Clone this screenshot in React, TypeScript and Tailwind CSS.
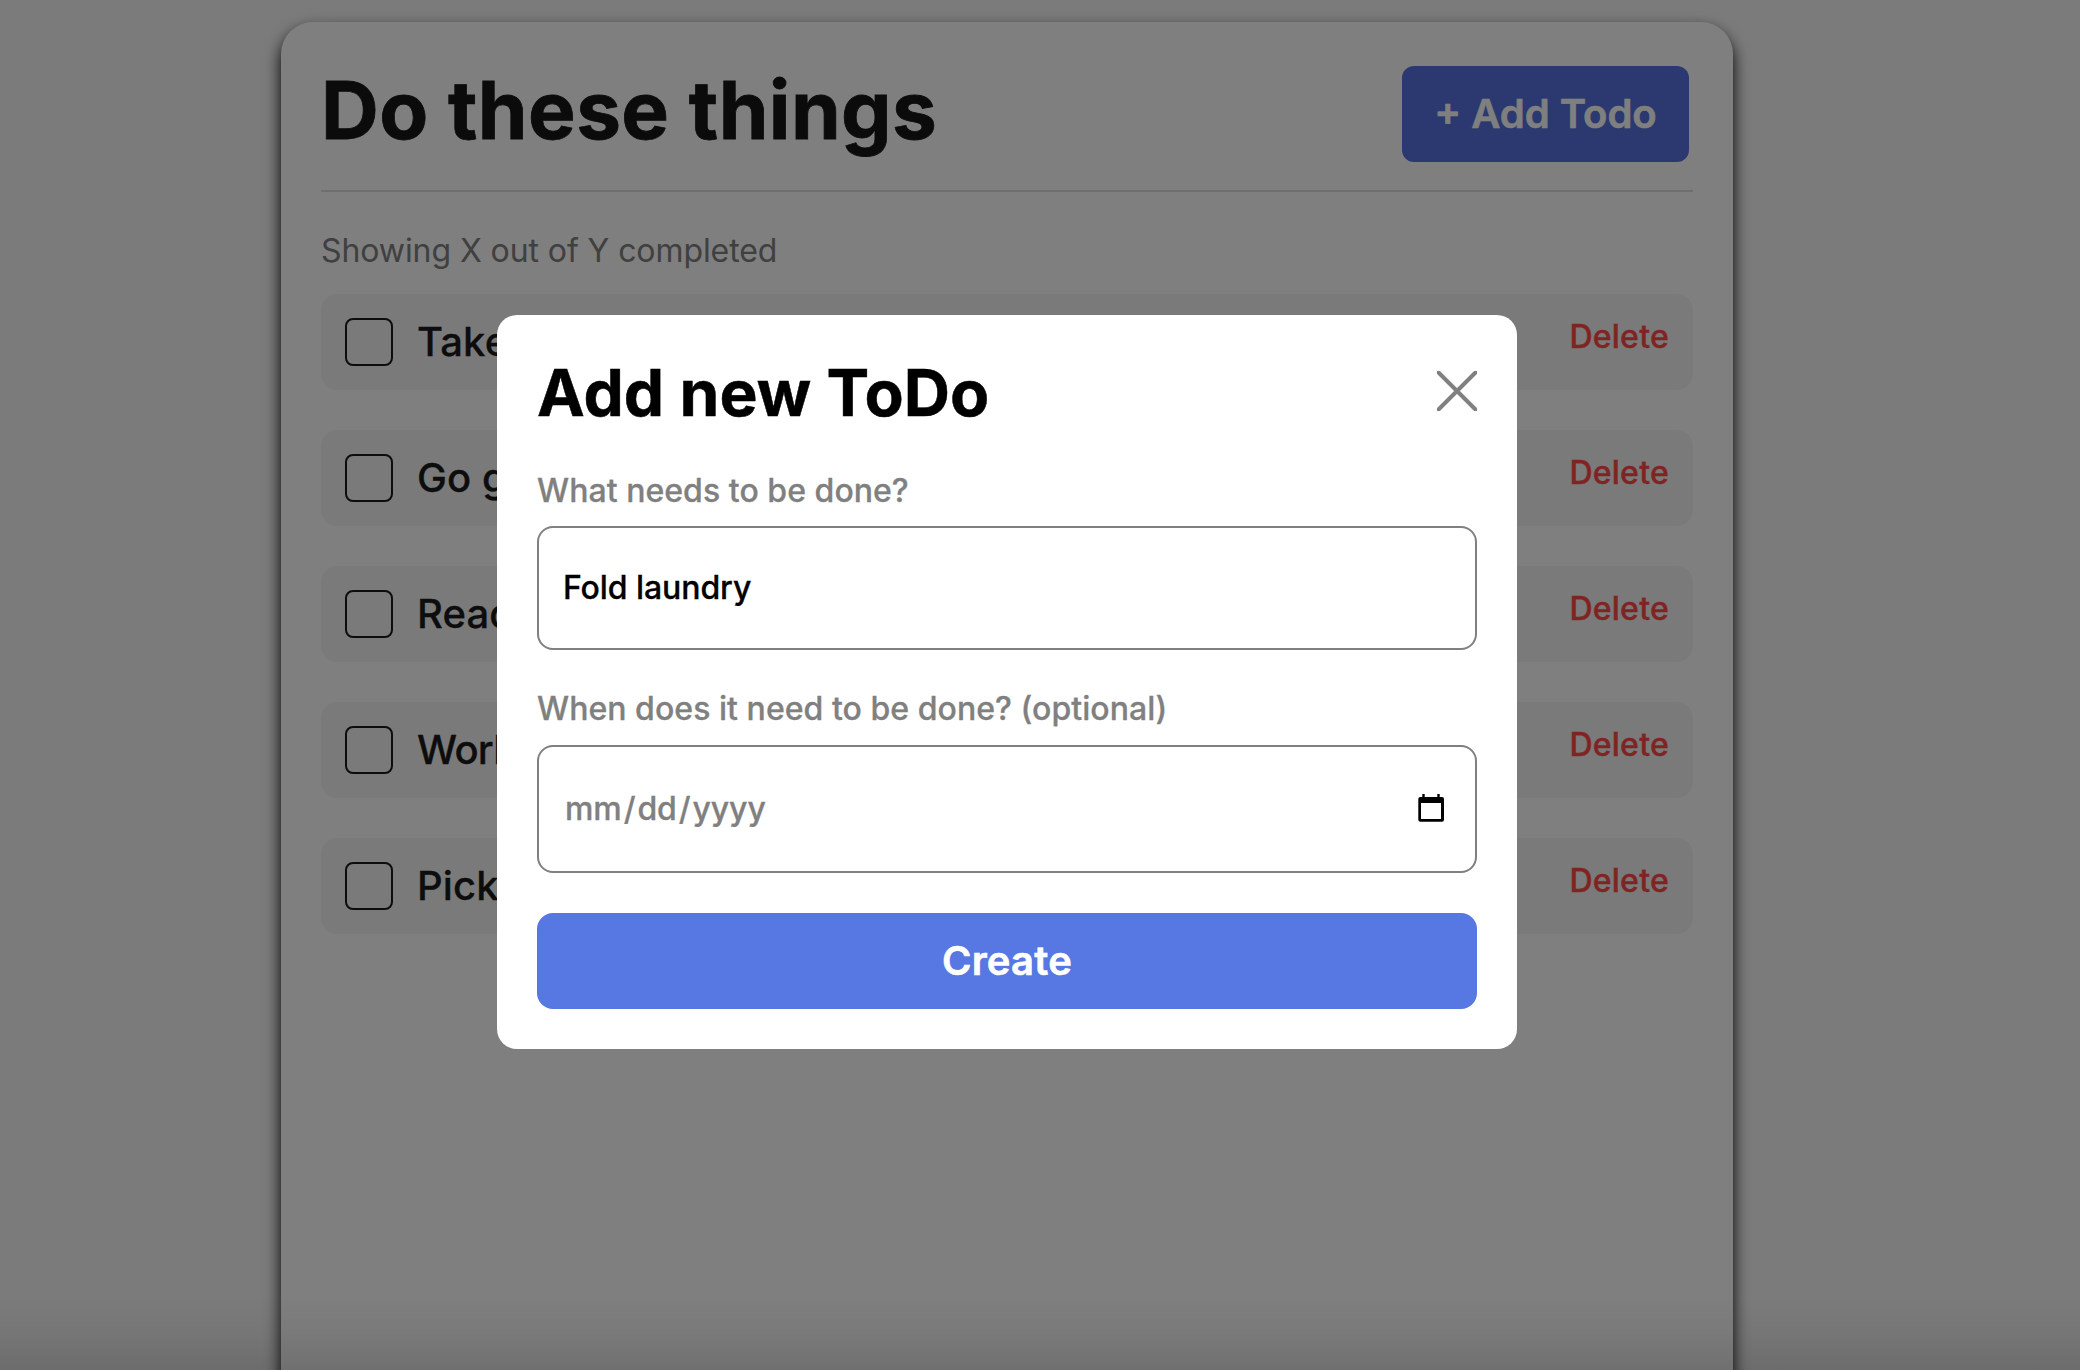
const todos = ['Take', 'Go g', 'Read', 'Work', 'Pick'];

function TodoRow({ label }: { label: string }) {
  return (
    <li className="flex h-24 items-start justify-between rounded-2xl bg-[#f4f4f4] p-6">
      <div className="flex items-center gap-6">
        <span className="size-12 rounded-lg border-2 border-[#1a1a1a]" />
        <span
          className={`text-[40px] leading-[48px] font-medium whitespace-nowrap text-[#1a1a1a] [-webkit-text-stroke:0.3px_#1a1a1a] ${
            label.startsWith('W') ? 'tracking-[-0.7px]' : 'tracking-[0.1px]'
          }`}
        >
          {label}
        </span>
      </div>
      <button className="-mt-px text-[32px] leading-[39px] font-medium tracking-[0.25px] text-[#ff4846] [-webkit-text-stroke:0.4px_#ff4846]">
        Delete
      </button>
    </li>
  );
}

function CalendarIcon() {
  return (
    <svg width="26" height="28" viewBox="0 0 26 28">
      <path
        fillRule="evenodd"
        d="M4.300 0h2.400v3h12.600V0h2.400v3H24a2 2 0 0 1 2 2v20.700a2 2 0 0 1-2 2H2.300a2 2 0 0 1-2-2V5a2 2 0 0 1 2-2h2zM3 9v16h20V9z"
        fill="#000"
      />
    </svg>
  );
}

function AddTodoModal() {
  return (
    <div className="mt-[315px] ml-[497px] h-[734px] w-[1020px] rounded-[20px] bg-white p-10">
      <div className="flex h-[78px] items-start justify-between">
        <h2 className="-mt-px text-[64px] leading-[78px] font-bold tracking-[0.1px] text-black [-webkit-text-stroke:0.5px_#000]">
          Add new ToDo
        </h2>
        <svg width="40" height="40" viewBox="0 0 40 40" className="mt-4">
          <path d="M1.500 1.500 38.500 38.500M38.500 1.500 1.500 38.500" stroke="#808080" strokeWidth="4" strokeLinecap="round" />
        </svg>
      </div>
      <label className="mt-[38px] block text-[32px] leading-[39px] font-medium tracking-[0.04px] text-[#808080] [-webkit-text-stroke:0.3px_#808080]">
        What needs to be done?
      </label>
      <input
        className="mt-4 block h-[124px] w-full rounded-2xl border-2 border-[#808080] px-6 pb-[2px] text-[32px] font-medium tracking-[-0.08px] text-black outline-none [-webkit-text-stroke:0.3px_#000]"
        defaultValue="Fold laundry"
      />
      <label className="mt-[39px] block text-[32px] leading-[39px] font-medium tracking-[0.04px] text-[#808080] [-webkit-text-stroke:0.3px_#808080]">
        When does it need to be done? (optional)
      </label>
      <div className="mt-[17px] flex h-32 items-center justify-between rounded-2xl border-2 border-[#808080] pr-[31px] pb-[2px] pl-[26px]">
        <span className="flex gap-[2px] text-[32px] leading-[39px] font-medium tracking-[-0.1px] text-[#808080] [-webkit-text-stroke:0.3px_#808080]">
          <span>mm</span>
          <span>/</span>
          <span>dd</span>
          <span>/</span>
          <span>yyyy</span>
        </span>
        <CalendarIcon />
      </div>
      <button className="mt-10 block h-24 w-full rounded-2xl bg-[#5777e3] text-[40px] leading-[48px] font-semibold tracking-[0.2px] text-white [-webkit-text-stroke:0.6px_#fff]">
        Create
      </button>
    </div>
  );
}

export default function App() {
  return (
    <div className="relative h-[1370px] w-[2080px] overflow-hidden bg-[#f6f6f6] font-['Inter',sans-serif]">
      <main className="mt-[22px] ml-[281px] h-[1500px] w-[1452px] rounded-[32px] bg-white px-10 pt-11 shadow-[0_8px_16px_#000]">
        <header className="flex h-[126px] items-start justify-between border-b-2 border-[#dedede] pr-1">
          <h1 className="-mt-[5px] text-[80px] leading-[97px] font-bold tracking-[0.4px] text-[#171717] [-webkit-text-stroke:0.8px_#171717]">
            Do these things
          </h1>
          <button className="h-24 w-[287px] rounded-xl bg-[#5672e0] text-[40px] font-semibold text-white [-webkit-text-stroke:0.6px_#fff]">
            + Add Todo
          </button>
        </header>
        <p className="mt-[39px] text-[32px] leading-[39px] tracking-[-0.08px] text-[#808080]">
          Showing X out of Y completed
        </p>
        <ul className="mt-6 flex flex-col gap-10">
          {todos.map((t) => (
            <TodoRow key={t} label={t} />
          ))}
        </ul>
      </main>
      <div className="absolute inset-0 flex items-start bg-black/50">
        <AddTodoModal />
      </div>
      <div className="absolute inset-x-0 bottom-0 h-[76px] bg-linear-to-b from-black/0 via-black/4 to-black/12" />
    </div>
  );
}
